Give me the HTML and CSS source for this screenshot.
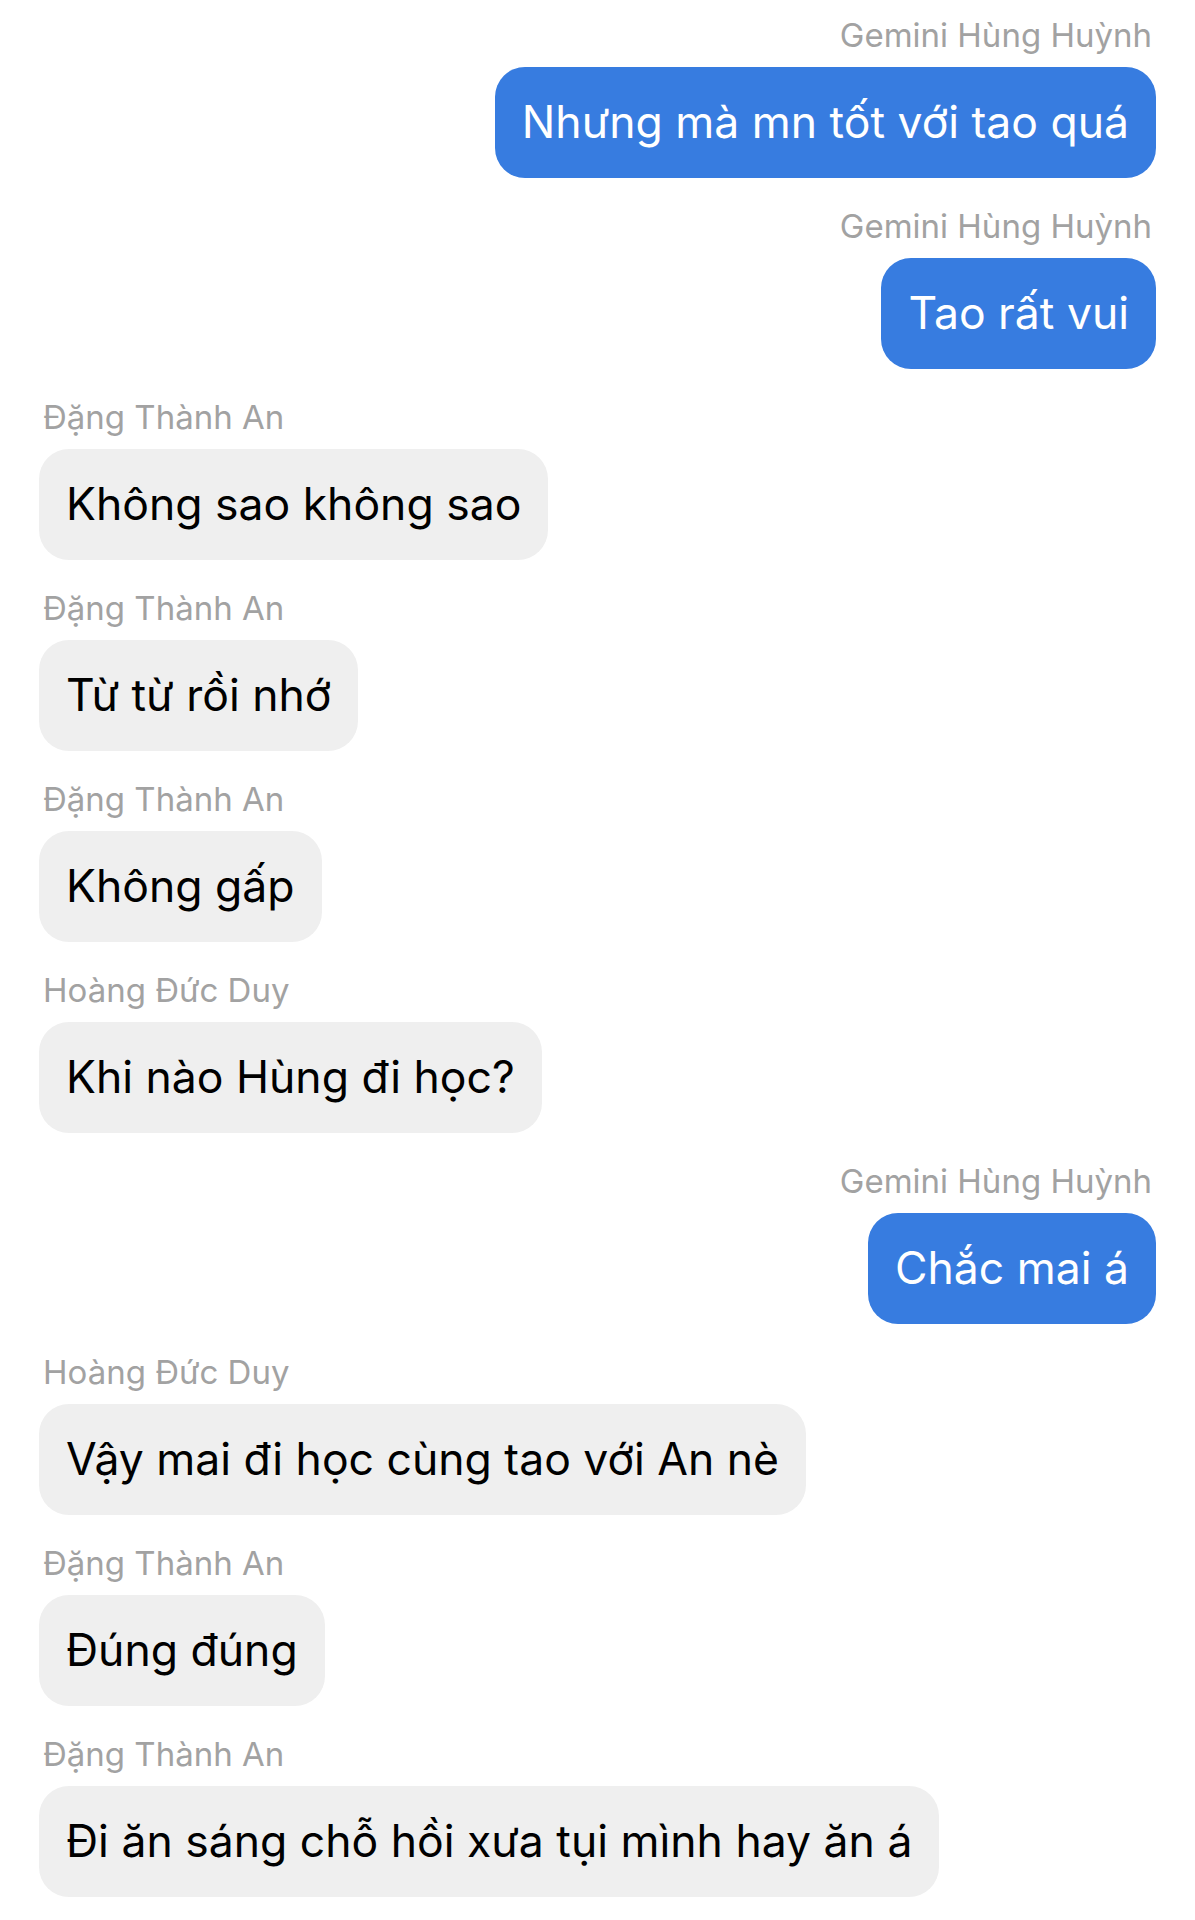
FILE: index.html
```html
<!DOCTYPE html>
<html lang="vi">
<head>
    <meta charset="UTF-8">
    <meta name="viewport" content="width=device-width, initial-scale=1.0">
    <title>Nhóm chat</title>
    <link rel="stylesheet" href="styles.css">
</head>
<body>
    <div class="chat">
        <div class="msg me">
            <div class="name">Gemini Hùng Huỳnh</div>
            <div class="bubble">Nhưng mà mn tốt với tao quá</div>
        </div>
        <div class="msg me">
            <div class="name">Gemini Hùng Huỳnh</div>
            <div class="bubble">Tao rất vui</div>
        </div>
        <div class="msg">
            <div class="name">Đặng Thành An</div>
            <div class="bubble">Không sao không sao</div>
        </div>
        <div class="msg">
            <div class="name">Đặng Thành An</div>
            <div class="bubble">Từ từ rồi nhớ</div>
        </div>
        <div class="msg">
            <div class="name">Đặng Thành An</div>
            <div class="bubble">Không gấp</div>
        </div>
        <div class="msg">
            <div class="name">Hoàng Đức Duy</div>
            <div class="bubble">Khi nào Hùng đi học?</div>
        </div>
        <div class="msg me">
            <div class="name">Gemini Hùng Huỳnh</div>
            <div class="bubble">Chắc mai á</div>
        </div>
        <div class="msg">
            <div class="name">Hoàng Đức Duy</div>
            <div class="bubble">Vậy mai đi học cùng tao với An nè</div>
        </div>
        <div class="msg">
            <div class="name">Đặng Thành An</div>
            <div class="bubble">Đúng đúng</div>
        </div>
        <div class="msg">
            <div class="name">Đặng Thành An</div>
            <div class="bubble">Đi ăn sáng chỗ hồi xưa tụi mình hay ăn á</div>
        </div>
    </div>
</body>
</html>
```

FILE: styles.css
```css
/* Nền */
body {
    margin: 0;
    padding: 0;
    background: #ffffff;
    font-family: 'Inter', 'Liberation Sans', sans-serif;
    color: #000;
}

/* Danh sách tin nhắn */
.chat {
    display: flex;
    flex-direction: column;
    gap: 27px;
    padding: 14px 39px 0;
}

.msg {
    display: flex;
    flex-direction: column;
    align-items: flex-start;
}

.msg.me {
    align-items: flex-end;
}

/* Tên người gửi */
.name {
    font-size: 33px;
    line-height: 36px;
    height: 36px;
    padding-top: 3px;
    color: #a2a2a2;
    margin: 0 4px 14px;
}

/* Bong bóng */
.bubble {
    font-size: 44.5px;
    line-height: 56px;
    padding: 27px 27px 28px;
    background-color: #efefef;
    border-radius: 30px;
    white-space: nowrap;
}

.msg.me .bubble {
    background-color: #377ce0;
    color: #ffffff;
}
```
